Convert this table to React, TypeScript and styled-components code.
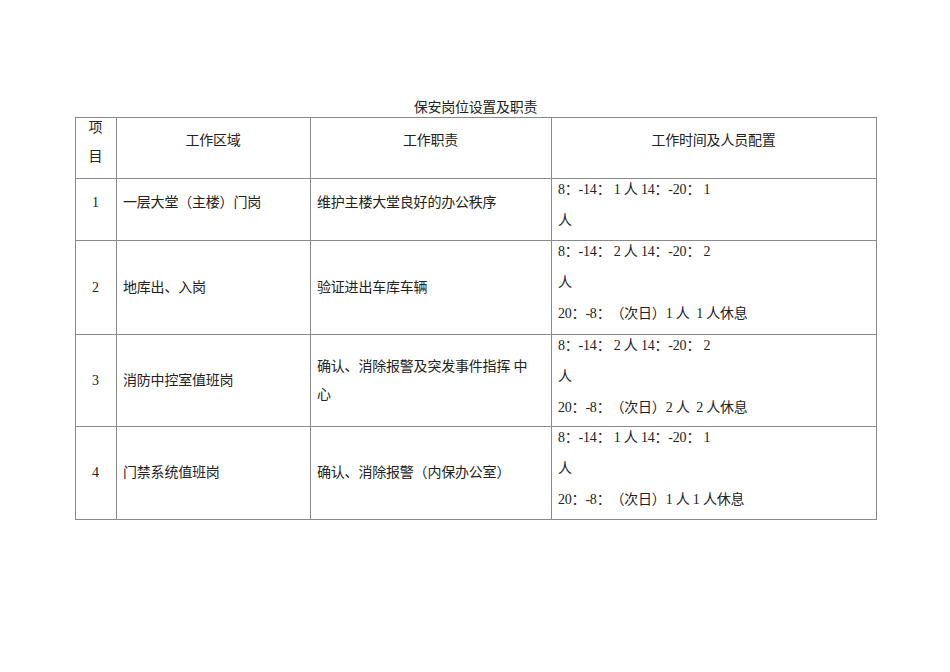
import React, {FC} from 'react';
import styled, {createGlobalStyle} from 'styled-components';

const GlobalStyle = createGlobalStyle`
  html, body {
    margin: 0;
    padding: 0;
    background: #ffffff;
  }
  body {
    font-family: "Liberation Serif", "Noto Sans CJK SC", serif;
    color: #222222;
    text-spacing-trim: space-all;
  }
`;

interface PostRow {
    no: string,
    area: string,
    duty: string[],
    time: string[],
    height: number,
    lift?: boolean
}

const rows: PostRow[] = [
    {no: '1', area: '一层大堂（主楼）门岗', duty: ['维护主楼大堂良好的办公秩序'], time: ['8：-14： 1 人 14：-20： 1', '人'], height: 62, lift: true},
    {no: '2', area: '地库出、入岗', duty: ['验证进出车库车辆'], time: ['8：-14： 2 人 14：-20： 2', '人', '20：-8：（次日）1 人  1 人休息'], height: 94},
    {no: '3', area: '消防中控室值班岗', duty: ['确认、消除报警及突发事件指挥 中', '心'], time: ['8：-14： 2 人 14：-20： 2', '人', '20：-8：（次日）2 人  2 人休息'], height: 92},
    {no: '4', area: '门禁系统值班岗', duty: ['确认、消除报警（内保办公室）'], time: ['8：-14： 1 人 14：-20： 1', '人', '20：-8：（次日）1 人 1 人休息'], height: 93},
];

const Page = styled.div`
  width: 950px;
  height: 672px;
  padding-top: 99px;
  box-sizing: border-box;
`;

const Sheet = styled.div`
  width: 801px;
  margin-left: 75px;
`;

const Title = styled.div`
  text-align: center;
  font-size: 14px;
  line-height: 18px;
  height: 18px;
  letter-spacing: -0.3px;
`;

const Table = styled.table`
  width: 801px;
  border-collapse: collapse;
  table-layout: fixed;
  font-size: 14px;
`;

const Row = styled.tr<{ $h: number }>`
  height: ${p => p.$h}px;
`;

const Cell = styled.td<{ $align?: 'center' | 'left', $lift?: boolean, $top?: boolean }>`
  border: 1px solid #8a8a8a;
  padding: ${p => p.$top ? '1px 7px 0 6px' : `0 7px ${p.$lift ? 14 : 0}px 6px`};
  vertical-align: ${p => p.$top ? 'top' : 'middle'};
  text-align: ${p => p.$align ?? 'left'};
  line-height: 28px;
  white-space: nowrap;
  letter-spacing: -0.2px;
`;

const Line = styled.div`
  line-height: 20px;
  margin-bottom: 11px;
  white-space: pre;

  &:last-child {
    margin-bottom: 0;
  }
`;

const Stack = styled.div`
  line-height: 29px;
  margin-top: -12px;
`;

const TimeLines: FC<{ lines: string[] }> = ({lines}) => (
    <>
        {lines.map((l, i) => <Line key={i}>{l}</Line>)}
    </>
);

const App: FC = () => {
    return (
        <Page>
            <GlobalStyle/>
            <Sheet>
                <Title>保安岗位设置及职责</Title>
                <Table>
                    <colgroup>
                        <col style={{width: 41}}/>
                        <col style={{width: 194}}/>
                        <col style={{width: 241}}/>
                        <col style={{width: 325}}/>
                    </colgroup>
                    <tbody>
                    <Row $h={61}>
                        <Cell $align={'center'}>
                            <Stack>项<br/>目</Stack>
                        </Cell>
                        <Cell $align={'center'} $lift>工作区域</Cell>
                        <Cell $align={'center'} $lift>工作职责</Cell>
                        <Cell $align={'center'} $lift>工作时间及人员配置</Cell>
                    </Row>
                    {rows.map(r =>
                        <Row key={r.no} $h={r.height}>
                            <Cell $align={'center'} $lift={r.lift}>{r.no}</Cell>
                            <Cell $lift={r.lift}>{r.area}</Cell>
                            <Cell $lift={r.lift}>
                                {r.duty.map((d, i) => <div key={i}>{d}</div>)}
                            </Cell>
                            <Cell $top>
                                <TimeLines lines={r.time}/>
                            </Cell>
                        </Row>
                    )}
                    </tbody>
                </Table>
            </Sheet>
        </Page>
    );
}

export default App;
